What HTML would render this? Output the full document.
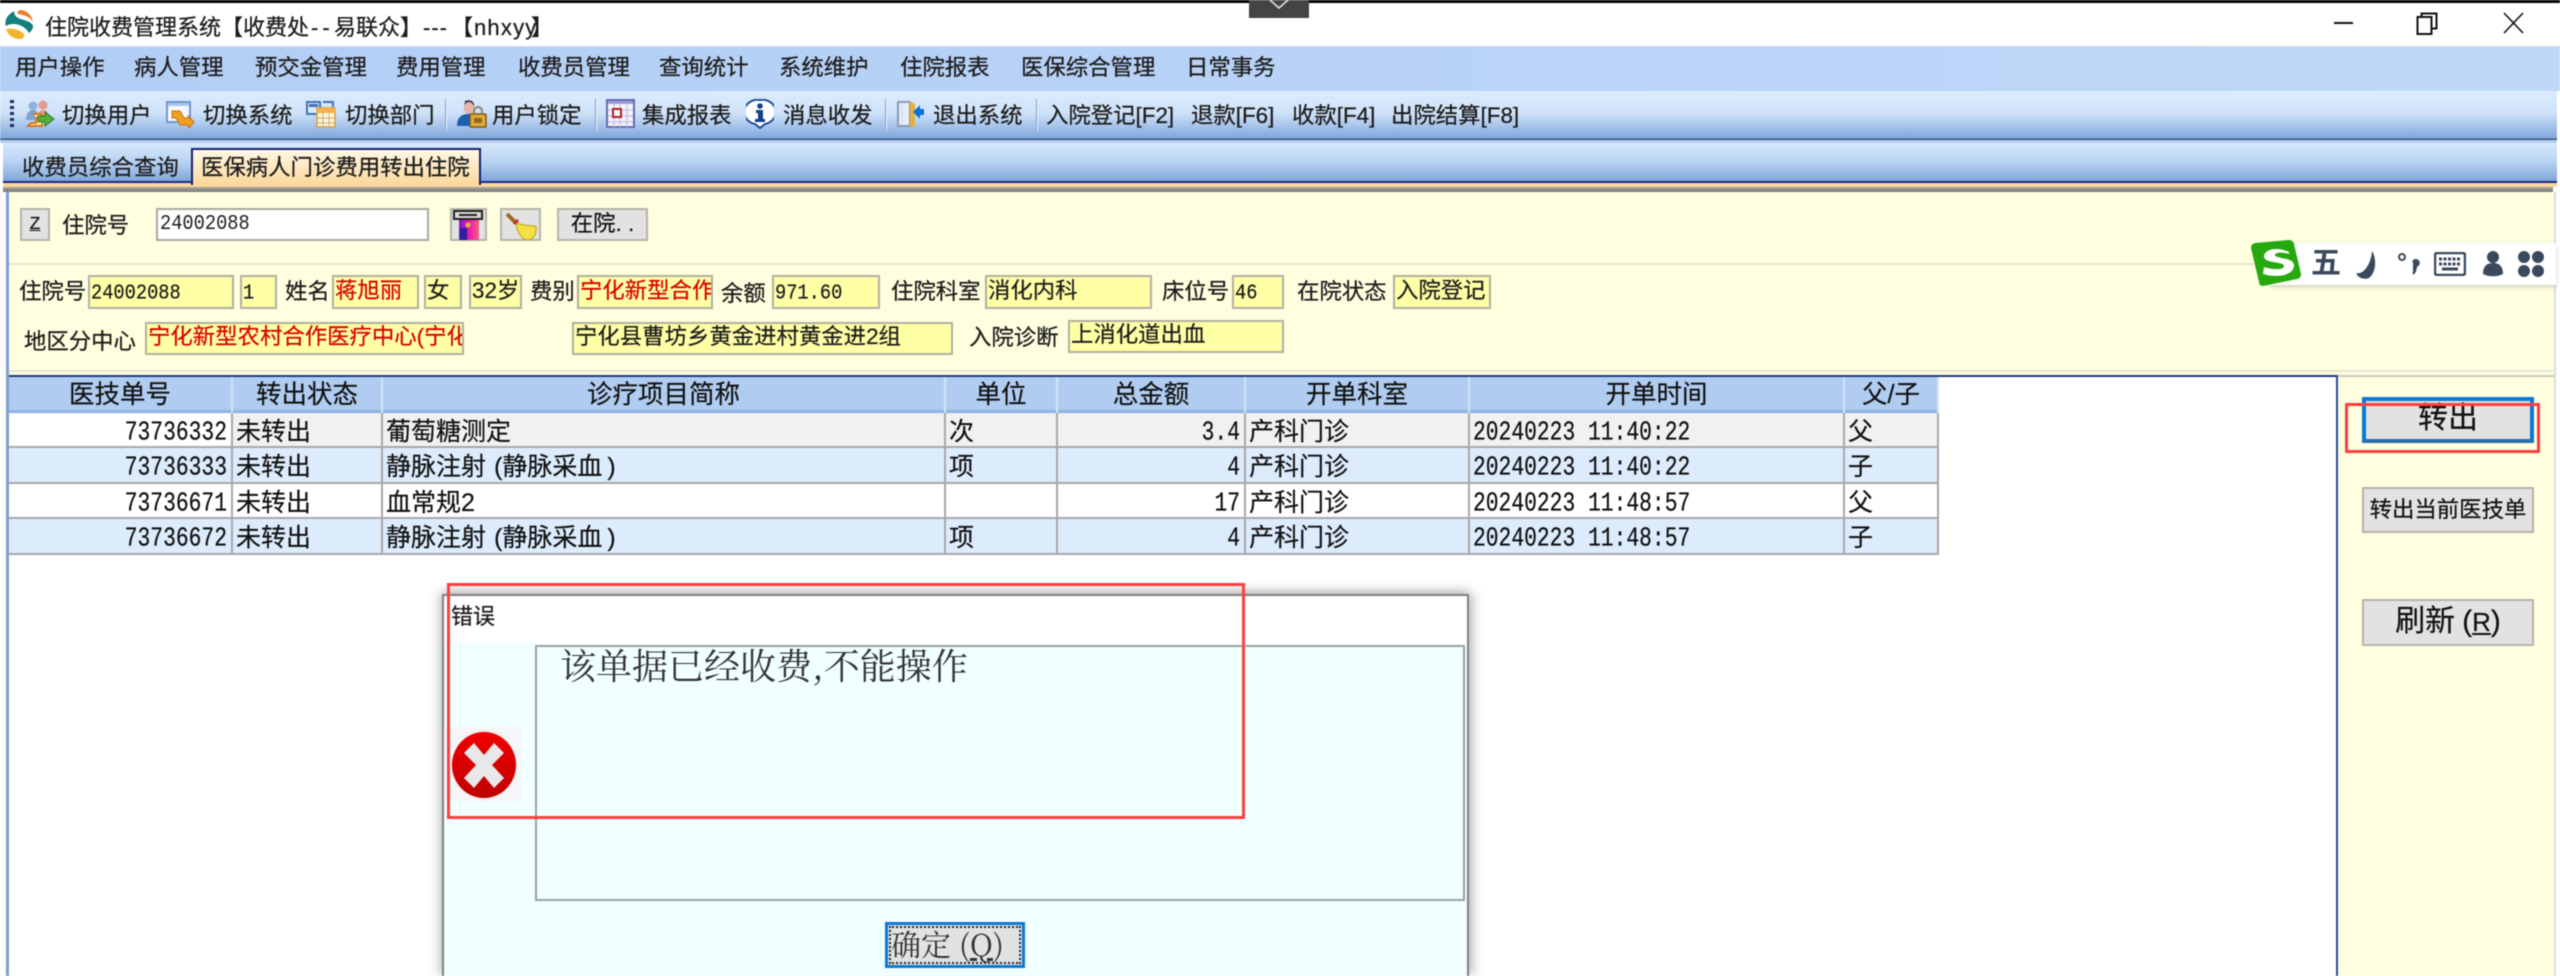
<!DOCTYPE html>
<html lang="zh"><head><meta charset="utf-8"><title>住院收费管理系统</title>
<style>
html,body{margin:0;padding:0;width:2560px;height:976px;overflow:hidden;background:#fff}
body{position:relative;font-family:"Liberation Sans","Noto Sans CJK SC",sans-serif;color:#1c1c1c}
div,span,svg,table{box-sizing:border-box}
#w{position:absolute;left:0;top:0;width:2560px;height:976px;overflow:hidden;filter:blur(.45px)}
.a{position:absolute}
.t{position:absolute;white-space:nowrap;line-height:30px;height:30px;font-size:22.4px;-webkit-text-stroke:.25px #1c1c1c}
.b{position:absolute;background:#ffffa6;border:2px solid #b0b0a0;overflow:hidden;white-space:nowrap;font-size:22.4px;line-height:28px;padding-left:1px;-webkit-text-stroke:.2px currentColor}
.r{color:#d80000}
.m{font-family:"Liberation Mono","Noto Sans CJK SC",monospace}
.n{font-size:18.7px;display:inline-block;transform:scaleY(1.15);transform-origin:50% 50%}
.sep{position:absolute;top:99px;height:32px;width:2px;background:#eaf3ff;border-left:1px solid #7f9fc8}
.btn{position:absolute;background:#e2e2e2;border:2px solid #b4b4a8;text-align:center;white-space:nowrap;color:#111;-webkit-text-stroke:.2px #111}
table{position:absolute;left:9px;top:377px;width:1930px;border-collapse:separate;border-spacing:0;table-layout:fixed;font-size:25px;color:#111;-webkit-text-stroke:.2px #111}
th{height:36px;padding:0;font-weight:normal;font-size:25.5px;background:linear-gradient(#b0cdf1 0,#b0cdf1 88%,#7fa6dc 100%);border-right:2px solid #d4e3f7;line-height:30px}
td{padding:0 4px;overflow:hidden;white-space:nowrap;border-right:2px solid #a8a8a8;border-bottom:2px solid #a8a8a8;vertical-align:middle}
td>div{height:33px;line-height:32px;padding-top:3px;overflow:hidden}
tr.l td>div{height:34px;line-height:32px}
td.x{padding-left:3px}
tr.w td{background:#fff}
tr.g td{background:#f1f1f1}
tr.g td:first-child{background:#fff}
tr.l td{background:#dcecfd}
.num{text-align:right;padding-right:4px}
.d{font-size:21.3px;display:inline-block;transform:scaleY(1.25);line-height:24px;vertical-align:middle}
.p{margin-left:8px}
.q{margin-left:5px}
.red{position:absolute;border:3px solid #ff3f3f;pointer-events:none}
</style></head>
<body><div id="w">
<!-- top bar -->
<div class="a" style="left:0;top:0;width:2560px;height:3px;background:#000"></div>
<div class="a" style="left:1249px;top:0;width:60px;height:18px;background:#444"></div>
<svg class="a" style="left:1268px;top:0" width="22" height="10" viewBox="0 0 22 10"><path d="M2 0l9 8 9-8" fill="none" stroke="#ddd" stroke-width="1.6"/></svg>

<!-- title -->
<svg class="a" style="left:4px;top:9px" width="30" height="30" viewBox="0 0 30 30"><path d="M16 1C22 1 28 6 29 13 25 7 20 6 14 5 13 3 14 2 16 1z" fill="#ec7a22"/><path d="M10 2C3 6 0 12 2 17 8 13 20 15 25 24 29 21 30 17 28 15 22 9 10 12 10 2z" fill="#12807c"/><path d="M2 20C4 27 10 30 15 30 19 30 21 28 20 25 15 20 7 19 2 20z" fill="#f2b52c"/></svg>
<span class="t" style="left:45px;top:13px;font-size:22px">住院收费管理系统【收费处</span>
<span class="t" style="left:311px;top:13px;font-size:22px;letter-spacing:4px">--</span>
<span class="t" style="left:334px;top:13px;font-size:22px">易联众】</span>
<span class="t" style="left:423px;top:13px;font-size:22px;letter-spacing:1px">---</span>
<span class="t" style="left:451px;top:13px;font-size:22px">【</span>
<span class="t" style="left:474px;top:13px;font-size:22px;letter-spacing:1.200px">nhxyy</span>
<span class="t" style="left:531px;top:13px;font-size:22px">】</span>
<svg class="a" style="left:2330px;top:10px" width="200" height="26" viewBox="0 0 200 26" fill="none" stroke="#111" stroke-width="2"><path d="M4 13h19"/><rect x="87.5" y="7" width="14" height="17"/><path d="M91.500 7V3.500h15v15h-5"/><path d="M174 3l19 20M193 3l-19 20" stroke-width="1.600"/></svg>

<!-- menu -->
<div class="a" style="left:0;top:46px;width:2560px;height:45px;background:linear-gradient(90deg,#b3cef4,#b9d4f8 60%,#c0d8f8);border-top:1px solid #cfd8e4"></div>
<span class="t" style="left:15px;top:53px">用户操作</span>
<span class="t" style="left:134px;top:53px">病人管理</span>
<span class="t" style="left:255px;top:53px">预交金管理</span>
<span class="t" style="left:396px;top:53px">费用管理</span>
<span class="t" style="left:518px;top:53px">收费员管理</span>
<span class="t" style="left:659px;top:53px">查询统计</span>
<span class="t" style="left:779px;top:53px">系统维护</span>
<span class="t" style="left:900px;top:53px">住院报表</span>
<span class="t" style="left:1021px;top:53px">医保综合管理</span>
<span class="t" style="left:1186px;top:53px">日常事务</span>

<!-- toolbar -->
<div class="a" style="left:0;top:91px;width:2557px;height:49px;background:linear-gradient(#dcecff 0,#cfe2f8 45%,#a9c6ec 70%,#7ea6dc 97%,#3a5a80 97%,#3a5a80 100%)"></div>
<svg class="a" style="left:9px;top:100px" width="6" height="28"><g fill="#1e2f60"><rect x="1" y="0" width="4" height="3"/><rect x="1" y="6" width="4" height="3"/><rect x="1" y="12" width="4" height="3"/><rect x="1" y="18" width="4" height="3"/><rect x="1" y="24" width="4" height="3"/></g></svg>
<svg class="a" style="left:23px;top:100px" width="32" height="28" viewBox="0 0 32 28"><circle cx="10" cy="6" r="4.500" fill="#8fb2de"/><circle cx="20" cy="5" r="4.500" fill="#e59a90"/><path d="M3 20c0-7 3-10 7-10s6 3 6 10z" fill="#7ea4d6"/><path d="M15 18c0-6 2-8 5-8s6 2 6 8z" fill="#e59a90"/><path d="M10 14h8v4h-5v5H8l-3 3h14v-3" fill="#fff3b8" stroke="#d8741a" stroke-width="2"/><path d="M15 16h7v-4l9 7-9 7v-4h-7z" fill="#58b038" stroke="#2a7a20"/></svg>
<span class="t" style="left:62px;top:101px">切换用户</span>
<svg class="a" style="left:166px;top:101px" width="30" height="29" viewBox="0 0 30 29"><rect x="1" y="1" width="23" height="20" fill="#f6faff" stroke="#6d98cc" stroke-width="2"/><rect x="2" y="2" width="21" height="3" fill="#a9c8ea"/><path d="M6 10h8l4 7h4v-2l6 6-5 6-1-3h-8l-4-7H6z" fill="#f2a020" stroke="#c47010"/></svg>
<span class="t" style="left:203px;top:101px">切换系统</span>
<svg class="a" style="left:306px;top:100px" width="30" height="28" viewBox="0 0 30 28"><rect x="1" y="2" width="13" height="12" fill="#dcebfa" stroke="#3f72b8" stroke-width="2"/><rect x="3" y="4" width="9" height="3" fill="#3f72b8"/><path d="M17 2h10v5" stroke="#3f72b8" stroke-width="2" fill="none"/><rect x="11" y="8" width="18" height="19" fill="#fbf4dc" stroke="#d9a040" stroke-width="1.500"/><rect x="11" y="8" width="18" height="5" fill="#eeb050"/><path d="M17 13v14M23 13v14M11 18h18M11 23h18" stroke="#c8b070"/></svg>
<span class="t" style="left:345px;top:101px">切换部门</span>
<div class="sep" style="left:445px"></div>
<svg class="a" style="left:457px;top:99px" width="30" height="29" viewBox="0 0 30 29"><path d="M8 2c5-2 9 0 9 4v4H7z" fill="#3c3448"/><ellipse cx="12" cy="9" rx="5" ry="6" fill="#eab4a8"/><path d="M0 27c0-9 5-12 11-12s8 3 8 12z" fill="#1f5fb0"/><rect x="13" y="15" width="16" height="13" rx="1" fill="#e2a938" stroke="#7a5a18" stroke-width="1.500"/><path d="M17 15v-3a4 4 0 0 1 8 0v3" fill="none" stroke="#8a8270" stroke-width="2"/><rect x="17" y="19" width="8" height="5" fill="#8a6a20"/></svg>
<span class="t" style="left:492px;top:101px">用户锁定</span>
<div class="sep" style="left:595px"></div>
<svg class="a" style="left:606px;top:99px" width="29" height="29" viewBox="0 0 29 29"><rect x="1" y="1" width="27" height="27" fill="#f4f4fd" stroke="#6a6ab4" stroke-width="2"/><rect x="2" y="2" width="25" height="3" fill="#9c9cd4"/><path d="M8 5v23M14 5v23M21 5v23M2 11h25M2 17h25M2 23h25" stroke="#c8c8ea" stroke-width="1.500"/><rect x="7" y="10" width="8" height="8" fill="#fff" stroke="#b02020" stroke-width="2"/></svg>
<span class="t" style="left:642px;top:101px">集成报表</span>
<svg class="a" style="left:746px;top:99px" width="28" height="30" viewBox="0 0 28 30"><path d="M14 1a13 12 0 0 1 5 24l-5 4-5-4A13 12 0 0 1 14 1z" fill="#fff" stroke="#1f4f9e" stroke-width="2"/><circle cx="14" cy="7" r="2.800" fill="#123f90"/><path d="M10 11h7v9h2v3H9v-3h3v-6h-2z" fill="#123f90"/></svg>
<span class="t" style="left:783px;top:101px">消息收发</span>
<div class="sep" style="left:885px"></div>
<svg class="a" style="left:896px;top:99px" width="29" height="30" viewBox="0 0 29 30"><path d="M2 3h12v24H2z" fill="#e8eef8" stroke="#8a98b4" stroke-width="2"/><path d="M6 5v20" stroke="#c8d4e8"/><path d="M14 2l5 3v23l-5-1z" fill="#e2b23c"/><path d="M17 13l7-7v4h4v6h-4v4z" fill="#0a70d8"/></svg>
<span class="t" style="left:933px;top:101px">退出系统</span>
<div class="sep" style="left:1036px"></div>
<span class="t" style="left:1046px;top:101px">入院登记[F2]</span>
<span class="t" style="left:1191px;top:101px">退款[F6]</span>
<span class="t" style="left:1292px;top:101px">收款[F4]</span>
<span class="t" style="left:1391px;top:101px">出院结算[F8]</span>

<!-- tabs -->
<div class="a" style="left:0;top:140px;width:2557px;height:3px;background:#b4cfee"></div>
<div class="a" style="left:3px;top:143px;width:2554px;height:38px;background:linear-gradient(#d8e9fc,#b8d2f2 50%,#7fa7dc)"></div>
<div class="a" style="left:3px;top:181px;width:2554px;height:2px;background:#1a2a88"></div>
<div class="a" style="left:3px;top:183px;width:2554px;height:4px;background:#fcd79c"></div>
<div class="a" style="left:3px;top:187px;width:2550px;height:5px;background:linear-gradient(#a8a8a0,#777)"></div>
<span class="t" style="left:22px;top:153px">收费员综合查询</span>
<div class="a" style="left:191px;top:148px;width:290px;height:37px;background:linear-gradient(#fff8e4,#fcd79c);border:2px solid #14206e;border-bottom:0"></div>
<span class="t" style="left:201px;top:153px">医保病人门诊费用转出住院</span>

<!-- yellow panel -->
<div class="a" style="left:6px;top:192px;width:2550px;height:784px;background:#ffffdf;border-left:3px solid #7f9fcf;border-right:2px solid #d8dce4"></div>
<div class="a" style="left:9px;top:263px;width:2544px;height:2px;background:#e4e4d0"></div>
<div class="a" style="left:9px;top:370px;width:2544px;height:2px;background:#e4e4d0"></div>

<div class="btn" style="left:20px;top:208px;width:30px;height:33px;font-size:18px;line-height:27px"><span class="m" style="text-decoration:underline">Z</span></div>
<span class="t" style="left:62px;top:211px;font-size:22.4px">住院号</span>
<div class="a" style="left:156px;top:208px;width:273px;height:33px;background:#fff;border:2px solid #a8a8a0;padding-left:2px;line-height:26px;font-size:19px"><span class="m n">24002088</span></div>
<div class="btn" style="left:450px;top:208px;width:37px;height:33px"></div>
<svg class="a" style="left:453px;top:210px" width="30" height="30" viewBox="0 0 30 30"><defs><linearGradient id="pg" x1="0" x2="1" y1="0" y2="0"><stop offset="0" stop-color="#6a20c8"/><stop offset=".45" stop-color="#f010b0"/><stop offset="1" stop-color="#f06080"/></linearGradient></defs><rect x="1" y="1" width="28" height="8" fill="#d8d8d8" stroke="#222" stroke-width="2"/><path d="M6 5h18" stroke="#222" stroke-width="2"/><rect x="6" y="10" width="20" height="20" fill="url(#pg)"/><circle cx="15" cy="15" r="2.500" fill="#d0c040"/><rect x="7" y="18" width="7" height="12" fill="#2a20a0"/></svg>
<div class="btn" style="left:500px;top:208px;width:41px;height:33px"></div>
<svg class="a" style="left:505px;top:212px" width="32" height="28" viewBox="0 0 32 28"><path d="M2 2l9 9" stroke="#a06a20" stroke-width="4"/><path d="M11 11C16 13 25 14 31 14 32 20 30 26 24 28 16 28 12 20 11 11z" fill="#f4e040" stroke="#b8a020"/><path d="M9 12l4-4" stroke="#c83020" stroke-width="3"/></svg>
<div class="btn" style="left:557px;top:208px;width:91px;height:33px;font-size:22.400px;line-height:28px">在院. .</div>

<!-- info row 1 -->
<span class="t" style="left:19px;top:277px">住院号</span>
<div class="b" style="left:88px;top:275px;width:146px;height:34px"><span class="m n">24002088</span></div>
<div class="b" style="left:240px;top:275px;width:37px;height:34px"><span class="m n">1</span></div>
<span class="t" style="left:285px;top:277px">姓名</span>
<div class="b r" style="left:332px;top:275px;width:87px;height:34px">蒋旭丽</div>
<div class="b" style="left:424px;top:275px;width:38px;height:34px">女</div>
<div class="b" style="left:469px;top:275px;width:53px;height:34px">32岁</div>
<span class="t" style="left:530px;top:277px">费别</span>
<div class="b r" style="left:577px;top:275px;width:136px;height:34px">宁化新型合作医疗</div>
<span class="t" style="left:721px;top:279px">余额</span>
<div class="b" style="left:772px;top:275px;width:108px;height:34px"><span class="m n">971.60</span></div>
<span class="t" style="left:891px;top:277px">住院科室</span>
<div class="b" style="left:985px;top:275px;width:167px;height:34px">消化内科</div>
<span class="t" style="left:1162px;top:277px">床位号</span>
<div class="b" style="left:1232px;top:275px;width:52px;height:34px"><span class="m n">46</span></div>
<span class="t" style="left:1297px;top:277px">在院状态</span>
<div class="b" style="left:1393px;top:275px;width:98px;height:34px">入院登记</div>

<!-- info row 2 -->
<span class="t" style="left:24px;top:327px">地区分中心</span>
<div class="b r" style="left:145px;top:322px;width:319px;height:33px;line-height:26px">宁化新型农村合作医疗中心(宁化)</div>
<div class="b" style="left:572px;top:322px;width:381px;height:33px;line-height:26px">宁化县曹坊乡黄金进村黄金进2组</div>
<span class="t" style="left:969px;top:323px">入院诊断</span>
<div class="b" style="left:1068px;top:320px;width:216px;height:33px;line-height:26px">上消化道出血</div>

<!-- table container -->
<div class="a" style="left:9px;top:375px;width:2329px;height:601px;background:#fff;border-top:2px solid #1c3a80;border-right:2px solid #2a4a96"></div>
<div class="a" style="left:2338px;top:375px;width:216px;height:2px;background:#c8c8c0"></div>
<table>
<colgroup><col style="width:224px"><col style="width:150px"><col style="width:563px"><col style="width:112px"><col style="width:188px"><col style="width:224px"><col style="width:375px"><col style="width:94px"></colgroup>
<tr><th>医技单号</th><th>转出状态</th><th>诊疗项目简称</th><th>单位</th><th>总金额</th><th>开单科室</th><th>开单时间</th><th>父/子</th></tr>
<tr class="g"><td class="num"><div><span class="m d">73736332</span></div></td><td class="x"><div>未转出</div></td><td class="x"><div>葡萄糖测定</div></td><td class="x"><div>次</div></td><td class="num"><div><span class="m d">3.4</span></div></td><td class="x"><div>产科门诊</div></td><td class="x"><div><span class="m d">20240223 11:40:22</span></div></td><td class="x"><div>父</div></td></tr>
<tr class="l"><td class="num"><div><span class="m d">73736333</span></div></td><td class="x"><div>未转出</div></td><td class="x"><div>静脉注射<span class="p">(</span>静脉采血<span class="q">)</span></div></td><td class="x"><div>项</div></td><td class="num"><div><span class="m d">4</span></div></td><td class="x"><div>产科门诊</div></td><td class="x"><div><span class="m d">20240223 11:40:22</span></div></td><td class="x"><div>子</div></td></tr>
<tr class="w"><td class="num"><div><span class="m d">73736671</span></div></td><td class="x"><div>未转出</div></td><td class="x"><div>血常规2</div></td><td class="x"><div></div></td><td class="num"><div><span class="m d">17</span></div></td><td class="x"><div>产科门诊</div></td><td class="x"><div><span class="m d">20240223 11:48:57</span></div></td><td class="x"><div>父</div></td></tr>
<tr class="l"><td class="num"><div><span class="m d">73736672</span></div></td><td class="x"><div>未转出</div></td><td class="x"><div>静脉注射<span class="p">(</span>静脉采血<span class="q">)</span></div></td><td class="x"><div>项</div></td><td class="num"><div><span class="m d">4</span></div></td><td class="x"><div>产科门诊</div></td><td class="x"><div><span class="m d">20240223 11:48:57</span></div></td><td class="x"><div>子</div></td></tr>
</table>

<!-- right buttons -->
<div class="btn" style="left:2362px;top:397px;width:172px;height:46px;border:4px solid #0a78d8;border-bottom-color:#2a6ea8;font-size:30px;line-height:36px">转出</div>
<div class="red" style="left:2345px;top:403px;width:195px;height:50px"></div>
<div class="btn" style="left:2362px;top:487px;width:172px;height:46px;font-size:22.400px;line-height:42px">转出当前医技单</div>
<div class="btn" style="left:2362px;top:599px;width:172px;height:47px;font-size:30px;line-height:42px">刷新<span style="margin-left:7px">(</span><span style="text-decoration:underline;font-size:26px">R</span>)</div>

<!-- IME bar -->
<div class="a" style="left:2270px;top:243px;width:286px;height:42px;background:#fff;box-shadow:0 2px 4px rgba(120,120,120,.35)"></div>
<svg class="a" style="left:2249px;top:240px" width="52" height="46" viewBox="0 0 52 46"><path d="M6 3L40 0q4 0 5 4l7 30q0 4-4 5L14 46q-4 0-4-4L2 8q0-4 4-5z" fill="#27a80f"/><path d="M40 12c-10-5-24-4-25 4-1 8 20 5 20 10 0 4-11 4-20 1l-1 7c13 4 30 2 31-8 1-9-19-7-19-11 0-3 8-3 14-1z" fill="#fff"/></svg>
<span class="t" style="left:2311px;top:249px;font-size:30px;color:#3a4a5c;font-weight:bold;-webkit-text-stroke:0">五</span>
<svg class="a" style="left:2354px;top:250px" width="30" height="30" viewBox="0 0 30 30"><path d="M18 1c5 8 4 22-3 27-5 2-11 0-13-5 7 2 15-8 16-22z" fill="#3a4a5c"/></svg>
<svg class="a" style="left:2396px;top:252px" width="24" height="26" viewBox="0 0 24 26"><circle cx="6" cy="5" r="3" fill="none" stroke="#3a4a5c" stroke-width="2"/><path d="M17 10a3 3 0 1 1 3 4c0 3-1 6-3 8" fill="#3a4a5c" stroke="#3a4a5c" stroke-width="2"/></svg>
<svg class="a" style="left:2434px;top:252px" width="32" height="24" viewBox="0 0 32 24"><rect x="1" y="1" width="30" height="22" rx="2" fill="none" stroke="#3a4a5c" stroke-width="2.500"/><path d="M5 7h22M5 12h22" stroke="#3a4a5c" stroke-width="3" stroke-dasharray="3 1.500"/><path d="M8 17h16" stroke="#3a4a5c" stroke-width="3"/></svg>
<svg class="a" style="left:2481px;top:250px" width="24" height="28" viewBox="0 0 24 28"><circle cx="12" cy="7" r="6" fill="#3a4a5c"/><path d="M2 24c0-8 4-11 10-11s10 3 10 11c-6 3-14 3-20 0z" fill="#3a4a5c"/></svg>
<svg class="a" style="left:2517px;top:250px" width="28" height="28" viewBox="0 0 28 28"><g fill="#3a4a5c"><circle cx="7" cy="7" r="6"/><circle cx="21" cy="7" r="6"/><circle cx="7" cy="21" r="6"/><circle cx="21" cy="21" r="6"/></g></svg>

<!-- dialog -->
<div class="a" style="left:442px;top:594px;width:1027px;height:382px;background:#f0ffff;border:2px solid #808080;border-bottom:0;box-shadow:0 -4px 10px rgba(80,80,80,.22),-4px 0 10px rgba(80,80,80,.18),6px 0 10px rgba(80,80,80,.22)"></div>
<div class="a" style="left:444px;top:596px;width:1023px;height:46px;background:#fff"></div>
<div class="a" style="left:535px;top:642px;width:932px;height:4px;background:#fff"></div>
<span class="t" style="left:451px;top:602px;font-size:22px">错误</span>
<div class="a" style="left:535px;top:645px;width:930px;height:256px;background:#f0ffff;border:2px solid #9aa0a0"></div>
<span class="t" style="left:560px;top:640px;height:50px;line-height:50px;font-family:'Noto Serif CJK SC',serif;font-size:36px;color:#333;-webkit-text-stroke:0">该单据已经收费,不能操作</span>
<div class="a" style="left:445px;top:727px;width:76px;height:74px;background:#f6f6f6"></div>
<svg class="a" style="left:450px;top:729px" width="68" height="72" viewBox="0 0 68 72"><defs><linearGradient id="g" x1="0" y1="0" x2="0" y2="1"><stop offset="0" stop-color="#f00000"/><stop offset="1" stop-color="#c00000"/></linearGradient></defs><ellipse cx="34" cy="36" rx="33" ry="35" fill="#eee"/><ellipse cx="34" cy="36" rx="32" ry="33" fill="url(#g)"/><path d="M14 24l10-10 10 12 10-12 10 10-12 12 12 13-10 10-10-12-10 12-10-10 12-13z" fill="#e8e8e8"/></svg>
<div class="a" style="left:885px;top:922px;width:140px;height:46px;background:#e2e2e2;border:3px solid #0a78d8"></div>
<div class="a" style="left:889px;top:926px;width:132px;height:38px;border:2px dotted #222"></div>
<span class="t" style="left:891px;top:925px;height:36px;line-height:36px;font-family:'Noto Serif CJK SC',serif;font-size:30px;color:#333;-webkit-text-stroke:0">确定<span style="margin-left:8px">(</span><span style="text-decoration:underline;font-size:30px">Q</span>)</span>
<div class="red" style="left:447px;top:583px;width:798px;height:236px"></div>
</div></body></html>
